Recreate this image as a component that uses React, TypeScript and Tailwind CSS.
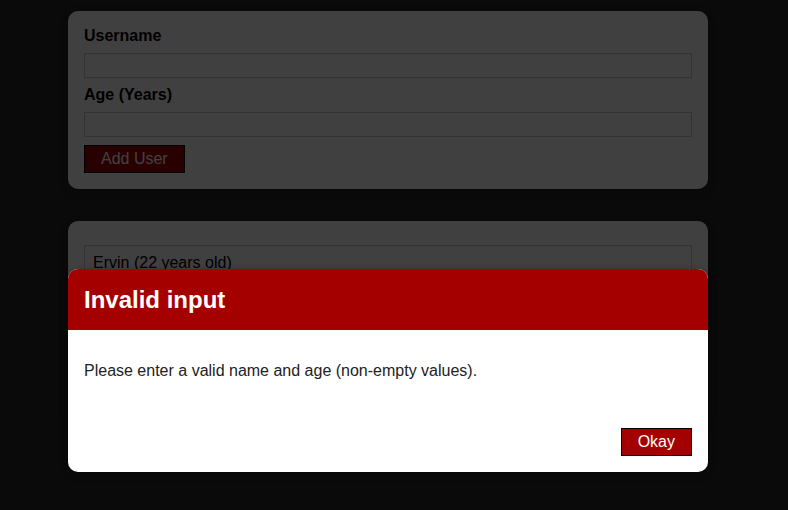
import React from "react";

export default function App() {
  const font = { fontFamily: '"Liberation Sans", Arial, sans-serif' };
  return (
    <div className="relative w-[788px] h-[510px] overflow-hidden bg-[#282828]" style={font}>
      <div className="flex flex-col gap-8 pt-[11px] pl-[68px]">
        <div className="w-[640px] bg-white rounded-[10px] shadow-[0_2px_8px_rgba(0,0,0,0.26)] p-4 text-base leading-[18px]">
          <label className="block font-bold mb-2 text-black">Username</label>
          <div className="h-[25px] border border-[#cccccc] bg-white mb-2"></div>
          <label className="block font-bold mb-2 text-black">Age (Years)</label>
          <div className="h-[25px] border border-[#cccccc] bg-white mb-2"></div>
          <button className="block bg-[#a50000] border border-black text-white px-4 h-[28px] leading-[18px]">
            Add User
          </button>
        </div>
        <div className="w-[640px] bg-white rounded-[10px] shadow-[0_2px_8px_rgba(0,0,0,0.26)] p-4 h-[200px]">
          <ul className="my-2">
            <li className="border border-[#cccccc] p-2 text-base leading-[18px] text-black">Ervin (22 years old)</li>
          </ul>
        </div>
      </div>
      <div className="absolute inset-0 bg-black/75"></div>
      <div className="absolute left-[68px] top-[269px] w-[640px] bg-white rounded-[10px] overflow-hidden shadow-[0_2px_8px_rgba(0,0,0,0.26)]">
        <header className="bg-[#a50000] p-4 h-[61px] flex items-center">
          <h2 className="text-white font-bold text-[24px] leading-[28px]">Invalid input</h2>
        </header>
        <div className="p-4">
          <p className="my-4 text-base leading-[18px] text-[#222]">
            Please enter a valid name and age (non-empty values).
          </p>
        </div>
        <footer className="p-4 flex justify-end">
          <button className="bg-[#a50000] border border-black text-white px-4 h-[28px] text-base leading-[18px]">
            Okay
          </button>
        </footer>
      </div>
    </div>
  );
}
